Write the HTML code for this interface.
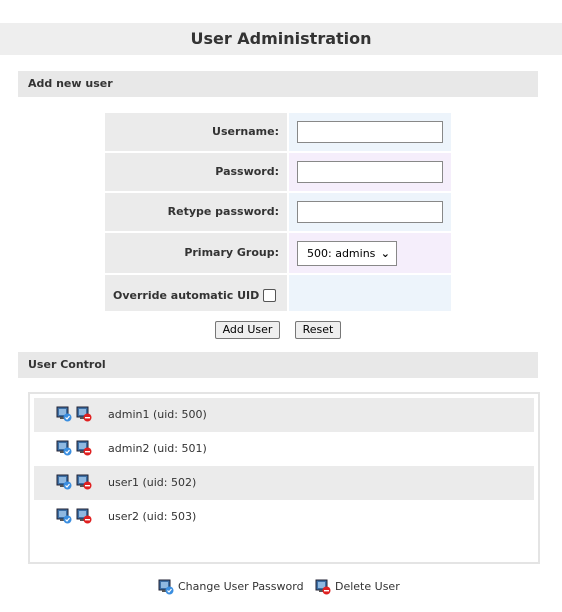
<!DOCTYPE html>
<html><head><style>
*{margin:0;padding:0;box-sizing:border-box}
body{width:562px;height:612px;background:#fff;font-family:"DejaVu Sans","Liberation Sans",sans-serif;color:#333;position:relative;overflow:hidden;font-size:11px}
.abs{position:absolute}
.title{left:0;top:23px;width:562px;height:32px;background:#eee;text-align:center;font-weight:bold;font-size:16px;line-height:32px;color:#333}
.bar{left:18px;width:520px;height:26px;background:#e8e8e8;font-weight:bold;font-size:11px;line-height:26px;padding-left:10px;color:#333}
.lab{left:105px;width:182px;background:#ebebeb;text-align:right;padding-right:8px;font-weight:bold;font-size:11px}
.val{left:289px;width:162px}
.inp{position:absolute;left:8px;width:146px;height:22px;border:1px solid #888;background:#fff}
.btn{height:18px;border:1px solid #777;border-radius:2px;background:#efefef;font-size:11px;text-align:center;line-height:16px;color:#000}
.row{left:34px;width:500px;height:34px;line-height:34px;font-size:11px}
.row span{position:absolute;left:74px}
svg.ic{position:absolute;width:16px;height:16px}
</style></head><body>
<div class="abs title">User Administration</div>
<div class="abs bar" style="top:71px">Add new user</div>

<div class="abs lab" style="top:113px;height:38px;line-height:38px">Username:</div>
<div class="abs val" style="top:113px;height:38px;background:#edf4fb"><div class="inp" style="top:8px"></div></div>
<div class="abs lab" style="top:153px;height:38px;line-height:38px">Password:</div>
<div class="abs val" style="top:153px;height:38px;background:#f5eefb"><div class="inp" style="top:8px"></div></div>
<div class="abs lab" style="top:193px;height:38px;line-height:38px">Retype password:</div>
<div class="abs val" style="top:193px;height:38px;background:#edf4fb"><div class="inp" style="top:8px"></div></div>
<div class="abs lab" style="top:233px;height:40px;line-height:40px">Primary Group:</div>
<div class="abs val" style="top:233px;height:40px;background:#f5eefb"><div class="inp" style="top:8px;width:100px;height:25px;font-weight:normal;font-size:11px;line-height:23px;padding-left:9px;color:#000">500: admins<span style="position:absolute;right:6px;top:0;font-weight:bold">&#8964;</span></div></div>
<div class="abs lab" style="top:275px;height:36px;text-align:left;padding-left:8px"><span style="position:absolute;left:8px;top:14px">Override automatic UID</span><span style="position:absolute;left:158px;top:14px;width:13px;height:13px;border:1px solid #555;border-radius:2px;background:#fff"></span></div>
<div class="abs val" style="top:275px;height:36px;background:#edf4fb"></div>

<div class="abs btn" style="left:215px;top:321px;width:65px">Add User</div>
<div class="abs btn" style="left:295px;top:321px;width:46px">Reset</div>

<div class="abs bar" style="top:352px">User Control</div>
<div class="abs" style="left:28px;top:392px;width:512px;height:172px;border:2px solid #e4e4e4"></div>

<svg width="0" height="0" style="position:absolute"><defs>
<g id="pc"><rect x="1" y="1" width="11" height="10" fill="#3b6ea5" stroke="#223" stroke-width="1"/><rect x="3" y="3" width="7" height="6" fill="#8fb8e0"/><rect x="4" y="11" width="5" height="2" fill="#555"/></g>
<g id="ok"><use href="#pc"/><circle cx="11.5" cy="11.5" r="4" fill="#3a8ee0"/><path d="M9.5 11.5l1.5 1.5 2.5-3" stroke="#fff" stroke-width="1.2" fill="none"/></g>
<g id="del"><use href="#pc"/><circle cx="11.5" cy="11.5" r="4" fill="#e02020"/><rect x="9" y="11" width="5" height="1.4" fill="#fff"/></g>
</defs></svg>

<div class="abs row" style="top:398px;background:#ebebeb"><svg class="ic" style="left:22px;top:8px"><use href="#ok"/></svg><svg class="ic" style="left:42px;top:8px"><use href="#del"/></svg><span>admin1 (uid: 500)</span></div>
<div class="abs row" style="top:432px"><svg class="ic" style="left:22px;top:8px"><use href="#ok"/></svg><svg class="ic" style="left:42px;top:8px"><use href="#del"/></svg><span>admin2 (uid: 501)</span></div>
<div class="abs row" style="top:466px;background:#ebebeb"><svg class="ic" style="left:22px;top:8px"><use href="#ok"/></svg><svg class="ic" style="left:42px;top:8px"><use href="#del"/></svg><span>user1 (uid: 502)</span></div>
<div class="abs row" style="top:500px"><svg class="ic" style="left:22px;top:8px"><use href="#ok"/></svg><svg class="ic" style="left:42px;top:8px"><use href="#del"/></svg><span>user2 (uid: 503)</span></div>

<svg class="ic" style="left:158px;top:579px"><use href="#ok"/></svg>
<div class="abs" style="left:178px;top:580px;font-size:11px">Change User Password</div>
<svg class="ic" style="left:315px;top:579px"><use href="#del"/></svg>
<div class="abs" style="left:335px;top:580px;font-size:11px">Delete User</div>
</body></html>
